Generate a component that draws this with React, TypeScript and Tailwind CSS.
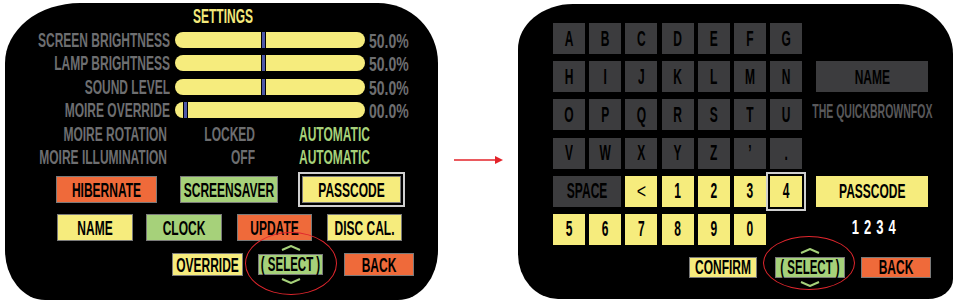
import React from "react";

type P = { children: React.ReactNode; k?: string };

// condensed look: small Liberation Sans stretched vertically
function S({ children, k = "scale-y-[1.75]" }: P) {
  return <span className={"inline-block whitespace-nowrap " + k}>{children}</span>;
}

function Btn({
  label,
  bg,
  w,
  h = "h-[27px]",
  extra = "",
}: {
  label: string;
  bg: string;
  w: string;
  h?: string;
  extra?: string;
}) {
  return (
    <div
      className={`${bg} ${w} ${h} ${extra} flex items-center justify-center border border-[#7a7a7a] text-black text-[12px] leading-none shrink-0`}
    >
      <S>{label}</S>
    </div>
  );
}

function Chevron({ up }: { up?: boolean }) {
  return (
    <svg width="20" height="6" viewBox="0 0 20 6" className="block">
      <polyline
        points={up ? "1,5 10,1 19,5" : "1,1 10,5 19,1"}
        fill="none"
        stroke="#a6d17a"
        strokeWidth="2"
      />
    </svg>
  );
}

function SelectBtn({ w, ring }: { w: string; ring: string }) {
  return (
    <div className={`relative ${w} h-[21px] shrink-0`}>
      <div className="absolute left-1/2 -translate-x-1/2 -top-[9px]">
        <Chevron up />
      </div>
      <div className="h-full bg-[#a6d17a] border border-[#7a7a7a] flex items-center justify-center text-black text-[11.5px] leading-none">
        <S k="scale-y-[1.8]">( SELECT )</S>
      </div>
      <div className="absolute left-1/2 -translate-x-1/2 -bottom-[9px]">
        <Chevron />
      </div>
      <div className={`absolute ${ring} rounded-[50%] border-[1.5px] border-[#e0262d]`} />
    </div>
  );
}

const bars = [
  { label: "SCREEN BRIGHTNESS", pos: "left-[86px]", pct: "50.0%" },
  { label: "LAMP BRIGHTNESS", pos: "left-[86px]", pct: "50.0%" },
  { label: "SOUND LEVEL", pos: "left-[86px]", pct: "50.0%" },
  { label: "MOIRE OVERRIDE", pos: "left-[8px]", pct: "00.0%" },
];

const modes = [
  { label: "MOIRE ROTATION", value: "LOCKED" },
  { label: "MOIRE ILLUMINATION", value: "OFF" },
];

const keyRows = [
  ["A", "B", "C", "D", "E", "F", "G"],
  ["H", "I", "J", "K", "L", "M", "N"],
  ["O", "P", "Q", "R", "S", "T", "U"],
  ["V", "W", "X", "Y", "Z", "’", "."],
];

function Key({ c, yellow, sel }: { c: string; yellow?: boolean; sel?: boolean }) {
  return (
    <div
      className={`${yellow ? "bg-[#f6ec7d]" : "bg-[#3c3c3e]"} ${
        sel ? "outline-2 outline-offset-2 outline-[#cfcfcf]" : ""
      } flex items-center justify-center text-black text-[12px] leading-none`}
    >
      <S k="scale-y-[1.85]">{c}</S>
    </div>
  );
}

function SettingsScreen() {
  return (
    <div className="w-[433px] h-[297px] mt-[3px] ml-[5px] shrink-0 bg-black rounded-[75px_60px_40px_40px/60px_60px_50px_50px] flex flex-col text-[12px] leading-none">
      <div className="h-[25px] flex items-center justify-center pl-[3px] text-[#f3e97b]">
        <S>SETTINGS</S>
      </div>
      {bars.map((b) => (
        <div key={b.label} className="h-[23.5px] flex items-center">
          <div className="w-[165px] text-right text-[#6d6e70]">
            <S>{b.label}</S>
          </div>
          <div className="relative ml-[5px] w-[190px] h-[16px] rounded-full bg-[#f6ec7d]">
            <div className={`absolute top-0 bottom-0 ${b.pos} w-[5px] border-x border-black bg-[#4e57a8]`} />
          </div>
          <div className="ml-[4px] text-[14px] text-[#6d6e70]">
            <S k="scale-y-[1.5]">{b.pct}</S>
          </div>
        </div>
      ))}
      {modes.map((m) => (
        <div key={m.label} className="h-[23.5px] flex items-center">
          <div className="w-[162px] text-right text-[#6d6e70]">
            <S>{m.label}</S>
          </div>
          <div className="w-[88px] text-right text-[#6d6e70]">
            <S>{m.value}</S>
          </div>
          <div className="ml-[44px] text-[#a6d17a]">
            <S>AUTOMATIC</S>
          </div>
        </div>
      ))}

      <div className="mt-[7px] ml-[51px] flex items-center">
        <Btn label="HIBERNATE" bg="bg-[#ef6a3a]" w="w-[101px]" />
        <Btn label="SCREENSAVER" bg="bg-[#a6d17a]" w="w-[98px]" extra="ml-[23px]" />
        <Btn
          label="PASSCODE"
          bg="bg-[#f6ec7d]"
          w="w-[99px]"
          extra="ml-[24px] outline-2 outline-offset-2 outline-[#cfcfcf]"
        />
      </div>
      <div className="mt-[11px] ml-[52px] flex items-center">
        <Btn label="NAME" bg="bg-[#f6ec7d]" w="w-[76px]" />
        <Btn label="CLOCK" bg="bg-[#a6d17a]" w="w-[76px]" extra="ml-[13px]" />
        <Btn label="UPDATE" bg="bg-[#ef6a3a]" w="w-[75px]" extra="ml-[15px]" />
        <Btn label="DISC CAL." bg="bg-[#f6ec7d]" w="w-[75px]" extra="ml-[15px]" />
      </div>
      <div className="mt-[12px] ml-[167px] flex items-center">
        <Btn label="OVERRIDE" bg="bg-[#f6ec7d]" w="w-[71px]" h="h-[23px]" />
        <div className="ml-[15px]">
          <SelectBtn w="w-[65px]" ring="-left-[13px] -top-[22px] w-[92px] h-[63px]" />
        </div>
        <Btn label="BACK" bg="bg-[#ef6a3a]" w="w-[70px]" h="h-[23px]" extra="ml-[21px]" />
      </div>
    </div>
  );
}

function PasscodeScreen() {
  return (
    <div className="w-[435px] h-[295px] mt-[4px] shrink-0 bg-black rounded-[55px_55px_25px_40px/45px_50px_20px_45px] flex flex-col leading-none">
      <div className="mt-[19px] ml-[35px] grid grid-cols-[repeat(7,32px)_124px] grid-rows-[repeat(6,31px)] gap-x-[4.2px] gap-y-[7.2px]">
        {keyRows.map((row, i) => (
          <React.Fragment key={i}>
            {row.map((c) => (
              <Key key={c} c={c} />
            ))}
            {i === 1 ? (
              <div className="ml-[10px] w-[112px] bg-[#3c3c3e] flex items-center justify-center text-black text-[12px]">
                <S>NAME</S>
              </div>
            ) : i === 2 ? (
              <div className="ml-[10px] w-[112px] flex items-start justify-center pt-[6px] text-[#58585a] text-[10.5px]">
                <S k="scale-y-[2]">THE QUICKBROWNFOX</S>
              </div>
            ) : (
              <div />
            )}
          </React.Fragment>
        ))}
        <div className="col-span-2 bg-[#3c3c3e] flex items-center justify-center text-black text-[12px]">
          <S k="scale-y-[1.85]">SPACE</S>
        </div>
        <div className="bg-[#f6ec7d] flex items-center justify-center text-black text-[16px] font-normal">
          <S k="scale-y-[1.3]">&lt;</S>
        </div>
        <Key c="1" yellow />
        <Key c="2" yellow />
        <Key c="3" yellow />
        <Key c="4" yellow sel />
        <div className="ml-[10px] w-[112px] bg-[#f6ec7d] flex items-center justify-center text-black text-[12px]">
          <S>PASSCODE</S>
        </div>
        {["5", "6", "7", "8", "9", "0"].map((c) => (
          <Key key={c} c={c} yellow />
        ))}
        <div />
        <div className="ml-[10px] w-[112px] flex items-start justify-center pt-[6px] pl-[8px] text-white text-[13px] tracking-[5px]">
          <S k="scale-y-[1.6]">1234</S>
        </div>
      </div>
      <div className="mt-[12px] ml-[171px] flex items-center">
        <Btn label="CONFIRM" bg="bg-[#f6ec7d]" w="w-[68px]" h="h-[21px]" />
        <div className="ml-[18px]">
          <SelectBtn w="w-[70px]" ring="-left-[12px] -top-[21px] w-[92px] h-[54px]" />
        </div>
        <Btn label="BACK" bg="bg-[#ef6a3a]" w="w-[70px]" h="h-[21px]" extra="ml-[16px]" />
      </div>
    </div>
  );
}

export default function App() {
  return (
    <div className="w-[959px] h-[304px] bg-white flex items-start overflow-hidden font-['Liberation_Sans',Arial,sans-serif] font-bold">
      <SettingsScreen />
      <div className="w-[80px] shrink-0">
        <svg width="50" height="12" viewBox="0 0 50 12" className="ml-[16px] mt-[154px] block">
          <line x1="0" y1="6" x2="42" y2="6" stroke="#e3232a" strokeWidth="1.6" />
          <polygon points="41,2 49,6 41,10" fill="#e3232a" />
        </svg>
      </div>
      <PasscodeScreen />
    </div>
  );
}
